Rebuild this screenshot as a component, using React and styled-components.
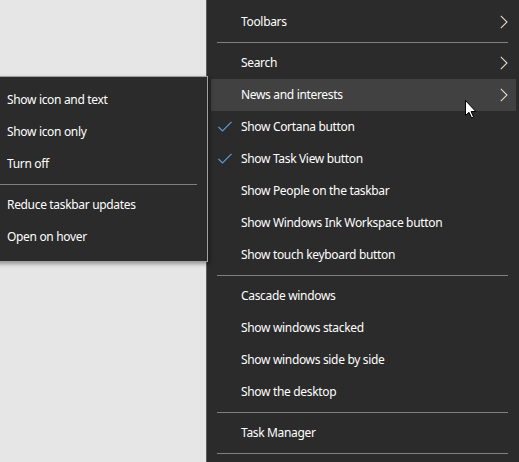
import React from 'react'
import styled, { createGlobalStyle } from 'styled-components'

const mainItems = [
  { label: 'Toolbars', arrow: true },
  { sep: true },
  { label: 'Search', arrow: true },
  { label: 'News and interests', arrow: true, hover: true },
  { label: 'Show Cortana button', checked: true },
  { label: 'Show Task View button', checked: true },
  { label: 'Show People on the taskbar' },
  { label: 'Show Windows Ink Workspace button' },
  { label: 'Show touch keyboard button' },
  { sep: true },
  { label: 'Cascade windows' },
  { label: 'Show windows stacked' },
  { label: 'Show windows side by side' },
  { label: 'Show the desktop' },
  { sep: true },
  { label: 'Task Manager' },
  { sep: true },
]

const subItems = [
  { label: 'Show icon and text' },
  { label: 'Show icon only' },
  { label: 'Turn off' },
  { sep: true },
  { label: 'Reduce taskbar updates' },
  { label: 'Open on hover' },
]

const Global = createGlobalStyle`
  html, body {
    margin: 0;
    padding: 0;
    height: 462px;
    overflow: hidden;
    background: #e6e6e6;
  }
  body {
    font-family: "Segoe UI", "Noto Sans", "Open Sans", sans-serif;
    font-size: 12px;
    letter-spacing: -0.33px;
    -webkit-font-smoothing: antialiased;
  }
`

const Page = styled.div`
  position: relative;
  display: flex;
  width: 519px;
  height: 462px;
  overflow: hidden;
`

const Desktop = styled.div`
  width: 206px;
  flex-shrink: 0;
  background: #e6e6e6;
`

const Menu = styled.div`
  flex: 1;
  background: #2b2b2b;
  border-left: 1px solid #5c5c5c;
  padding: 6px 3px 0 4px;
  color: #fff;
`

const Row = styled.div`
  position: relative;
  display: flex;
  align-items: center;
  box-sizing: border-box;
  height: 32px;
  padding: 0 0 1px ${p => p.$indent}px;
  background: ${p => (p.$hover ? '#414141' : 'transparent')};
  color: #fff;
  white-space: nowrap;
`

const Sep = styled.div`
  height: 9px;
  display: flex;
  align-items: center;
  padding: ${p => p.$pad};

  &::after {
    content: '';
    flex: 1;
    height: 1px;
    background: #808080;
  }
`

const Check = styled.svg`
  position: absolute;
  left: 7px;
  top: 10px;
`

const Chevron = styled.svg`
  margin-left: auto;
  margin-right: 8px;
  margin-top: 1px;
`

const SubMenu = styled.div`
  position: absolute;
  left: -28px;
  top: 76px;
  width: 234px;
  padding: 7px 0 8px;
  background: #2b2b2b;
  border: 1px solid #a0a0a0;
  box-shadow: 2px 2px 4px rgba(0, 0, 0, 0.35);
`

const Cursor = styled.svg`
  position: absolute;
  left: 465px;
  top: 100px;
`

function MenuList({ items, indent, sepPad }) {
  return items.map((item, i) =>
    item.sep ? (
      <Sep key={i} $pad={sepPad} />
    ) : (
      <Row key={i} $indent={indent} $hover={item.hover}>
        {item.checked && (
          <Check width="14" height="11" viewBox="0 0 14 11">
            <polyline points="0.5,6 4.5,10 13.5,0.8" fill="none" stroke="#5d9ad6" strokeWidth="1.2" />
          </Check>
        )}
        {item.label}
        {item.arrow && (
          <Chevron width="8" height="14" viewBox="0 0 8 14">
            <polyline points="0.8,0.8 7,7 0.8,13.2" fill="none" stroke="#e6d8c8" strokeWidth="1.1" />
          </Chevron>
        )}
      </Row>
    )
  )
}

export default function App() {
  return (
    <>
      <Global />
      <Page>
        <Desktop />
        <Menu>
          <MenuList items={mainItems} indent={30} sepPad="0 8px 0 6px" />
        </Menu>
        <SubMenu>
          <MenuList items={subItems} indent={34} sepPad="0 10px 0 0" />
        </SubMenu>
        <Cursor width="12" height="19" viewBox="0 0 12 19">
          <path d="M0.5,0.5 L0.5,15.5 L4,12.3 L6.6,18 L8.6,17.1 L6.1,11.5 L10.8,11.5 Z" fill="#fff" stroke="#000" strokeWidth="1" strokeLinejoin="miter" />
        </Cursor>
      </Page>
    </>
  )
}
